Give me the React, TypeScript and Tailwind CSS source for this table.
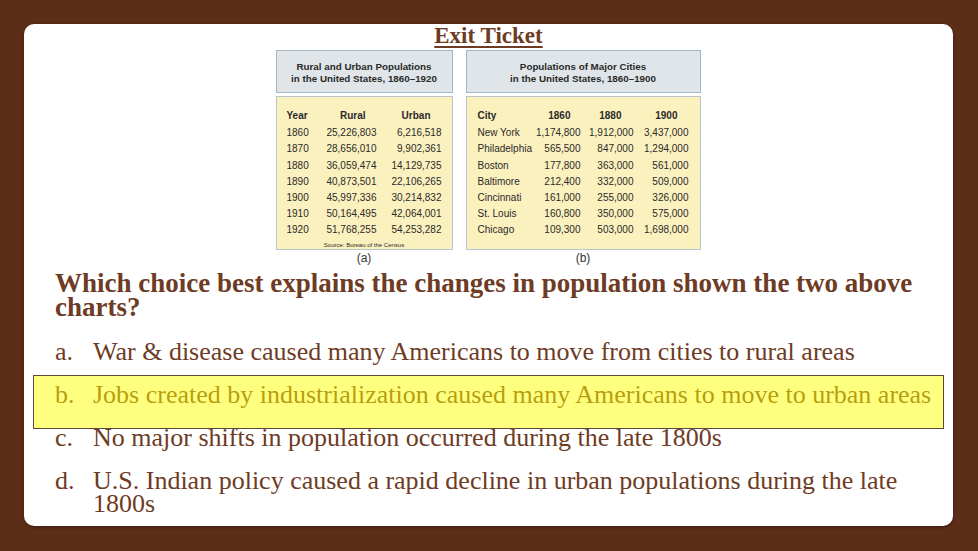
import React from "react";

const ruralUrban = [
  ["1860", "25,226,803", "6,216,518"],
  ["1870", "28,656,010", "9,902,361"],
  ["1880", "36,059,474", "14,129,735"],
  ["1890", "40,873,501", "22,106,265"],
  ["1900", "45,997,336", "30,214,832"],
  ["1910", "50,164,495", "42,064,001"],
  ["1920", "51,768,255", "54,253,282"],
];

const cities = [
  ["New York", "1,174,800", "1,912,000", "3,437,000"],
  ["Philadelphia", "565,500", "847,000", "1,294,000"],
  ["Boston", "177,800", "363,000", "561,000"],
  ["Baltimore", "212,400", "332,000", "509,000"],
  ["Cincinnati", "161,000", "255,000", "326,000"],
  ["St. Louis", "160,800", "350,000", "575,000"],
  ["Chicago", "109,300", "503,000", "1,698,000"],
];

const sans = { fontFamily: '"Liberation Sans", Arial, sans-serif' };
const serif = { fontFamily: '"Liberation Serif", "Times New Roman", serif' };

function TableHeader({ l1, l2 }: { l1: string; l2: string }) {
  return (
    <div className="h-[43px] bg-[#dfe5e8] border border-[#a4b7c6] flex flex-col items-center justify-center pt-[3px] text-[9.8px] font-bold leading-[12px] text-[#2a2a2a]">
      <div>{l1}</div>
      <div>{l2}</div>
    </div>
  );
}

export default function App() {
  return (
    <div className="w-[978px] h-[551px] bg-[#5c2d17] p-[24px] pr-[25px] overflow-hidden">
      <div className="relative w-[929px] h-[502px] bg-white rounded-[10px] shadow-[0_1px_3px_rgba(0,0,0,0.4)] text-[#6e3b24]" style={serif}>
        <div className="flex justify-center">
          <div className="text-[23px] leading-[24px] font-bold underline underline-offset-[3px] decoration-[1.5px]">Exit Ticket</div>
        </div>

        <div className="flex justify-center gap-[13px] mt-[2px] pr-[1px]" style={sans}>
          {/* table a */}
          <div className="w-[177px] flex flex-col">
            <TableHeader l1="Rural and Urban Populations" l2="in the United States, 1860–1920" />
            <div className="mt-[3px] h-[154px] bg-[#fbf1bf] border border-[#b9c4cc] pl-[10px] pt-[11px] text-[10px] leading-[16.2px] text-[#2a2a2a]">
              <div className="grid grid-cols-[30px_60px_65px] font-bold mb-[1px]">
                <div>Year</div>
                <div className="text-right pr-[11px]">Rural</div>
                <div className="text-right pr-[11px]">Urban</div>
              </div>
              {ruralUrban.map((r) => (
                <div key={r[0]} className="grid grid-cols-[30px_60px_65px]">
                  <div>{r[0]}</div>
                  <div className="text-right">{r[1]}</div>
                  <div className="text-right">{r[2]}</div>
                </div>
              ))}
              <div className="text-[6px] leading-[8px] mt-[2px] text-center pr-[10px]">Source: Bureau of the Census</div>
            </div>
            <div className="text-[12px] leading-[16px] text-center text-[#333]">(a)</div>
          </div>

          {/* table b */}
          <div className="w-[235px] flex flex-col">
            <TableHeader l1="Populations of Major Cities" l2="in the United States, 1860–1900" />
            <div className="mt-[3px] h-[154px] bg-[#fbf1bf] border border-[#b9c4cc] pl-[11px] pt-[11px] text-[10px] leading-[16.2px] text-[#2a2a2a]">
              <div className="grid grid-cols-[57px_46px_53px_55px] font-bold mb-[1px]">
                <div>City</div>
                <div className="text-right pr-[10px]">1860</div>
                <div className="text-right pr-[12px]">1880</div>
                <div className="text-right pr-[11px]">1900</div>
              </div>
              {cities.map((r) => (
                <div key={r[0]} className="grid grid-cols-[57px_46px_53px_55px]">
                  <div>{r[0]}</div>
                  <div className="text-right">{r[1]}</div>
                  <div className="text-right">{r[2]}</div>
                  <div className="text-right">{r[3]}</div>
                </div>
              ))}
            </div>
            <div className="text-[12px] leading-[16px] text-center text-[#333]">(b)</div>
          </div>
        </div>

        <div className="pl-[31px] pr-[10px] mt-[5px]">
          <div className="text-[27px] leading-[24px] font-bold">
            Which choice best explains the changes in population shown the two above
            <br />
            charts?
          </div>

          <div className="mt-[21px] flex flex-col gap-[20px] text-[26px] leading-[23px]">
            <div className="flex">
              <div className="w-[38px] shrink-0">a.</div>
              <div>War &amp; disease caused many Americans to move from cities to rural areas</div>
            </div>
            <div className="flex">
              <div className="w-[38px] shrink-0">b.</div>
              <div>Jobs created by industrialization caused many Americans to move to urban areas</div>
            </div>
            <div className="flex">
              <div className="w-[38px] shrink-0">c.</div>
              <div>No major shifts in population occurred during the late 1800s</div>
            </div>
            <div className="flex">
              <div className="w-[38px] shrink-0">d.</div>
              <div className="w-[830px]">U.S. Indian policy caused a rapid decline in urban populations during the late 1800s</div>
            </div>
          </div>
        </div>

        <div className="absolute left-[9px] top-[351px] w-[911px] h-[54px] bg-[#ffff00]/50 border-[1.5px] border-[#5a4a3c]" />
      </div>
    </div>
  );
}
